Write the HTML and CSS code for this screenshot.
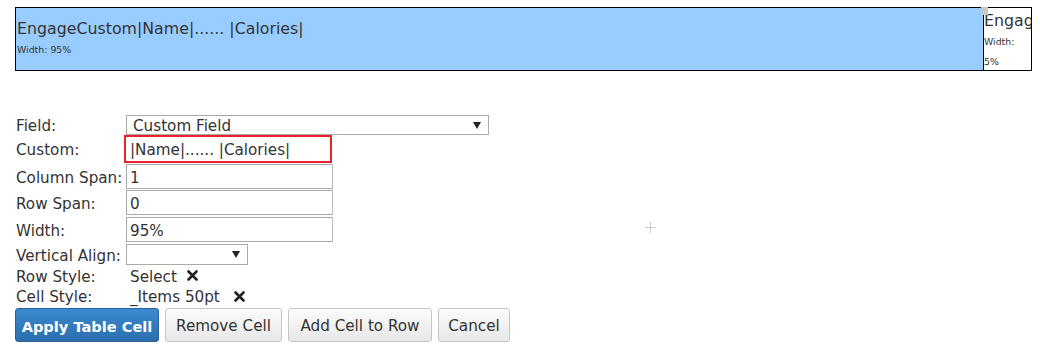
FILE: index.html
```html
<!DOCTYPE html>
<html lang="en">
<head>
  <meta charset="UTF-8">
  <title>Table Cell Editor</title>
  <link rel="stylesheet" href="styles.css">
</head>
<body>
  <div class="page">
    <div class="table-preview">
      <div class="cell cell-main">
        <div class="cell-title">EngageCustom|Name|...... |Calories|</div>
        <div class="cell-meta">Width: 95%</div>
      </div>
      <div class="cell cell-side">
        <span class="handle"></span>
        <div class="cell-title">EngageCustom</div>
        <div class="cell-meta">Width: 5%</div>
      </div>
    </div>

    <form class="cell-form">
      <div class="row row-field">
        <label class="label">Field:</label>
        <div class="fake-select select-wide">
          <span>Custom Field</span>
          <span class="arrow"></span>
        </div>
      </div>
      <div class="row row-custom">
        <label class="label">Custom:</label>
        <input class="text-input input-active" type="text" value="|Name|...... |Calories|">
      </div>
      <div class="row row-input gap1">
        <label class="label">Column Span:</label>
        <input class="text-input" type="text" value="1">
      </div>
      <div class="row row-input gap1">
        <label class="label">Row Span:</label>
        <input class="text-input" type="text" value="0">
      </div>
      <div class="row row-input gap2">
        <label class="label">Width:</label>
        <input class="text-input" type="text" value="95%">
      </div>
      <div class="row row-select gap2">
        <label class="label">Vertical Align:</label>
        <div class="fake-select select-small">
          <span></span>
          <span class="arrow"></span>
        </div>
      </div>
      <div class="row row-style">
        <label class="label">Row Style:</label>
        <span class="style-value">Select</span>
        <svg class="remove-x" width="11" height="11" viewBox="0 0 11 11"><path d="M1.5 1.5 L9.5 9.5 M9.5 1.5 L1.5 9.5" stroke="#222" stroke-width="2.6" stroke-linecap="round"/></svg>
      </div>
      <div class="row row-style row-last">
        <label class="label">Cell Style:</label>
        <span class="style-value">_Items 50pt</span>
        <svg class="remove-x remove-x-wide" width="11" height="11" viewBox="0 0 11 11"><path d="M1.5 1.5 L9.5 9.5 M9.5 1.5 L1.5 9.5" stroke="#222" stroke-width="2.6" stroke-linecap="round"/></svg>
      </div>
      <div class="buttons">
        <button type="button" class="btn btn-primary">Apply Table Cell</button>
        <button type="button" class="btn btn-remove">Remove Cell</button>
        <button type="button" class="btn btn-add">Add Cell to Row</button>
        <button type="button" class="btn btn-cancel">Cancel</button>
      </div>
    </form>

    <svg class="drop-plus" width="11" height="11" viewBox="0 0 11 11"><path d="M5.5 0 V11 M0 5.5 H11" stroke="#c8c8c8" stroke-width="1"/></svg>
  </div>
</body>
</html>
```

FILE: styles.css
```css
* {
  box-sizing: border-box;
}

body {
  margin: 0;
  background: #fff;
  font-family: 'DejaVu Sans', Verdana, sans-serif;
  font-size: 15.2px;
  color: #333;
}

.page {
  position: relative;
  padding: 7px 8px 0 15px;
  width: 1040px;
  height: 355px;
}

/* table preview */

.table-preview {
  display: flex;
  width: 1017px;
  height: 64px;
  border: 1px solid #000;
}

.cell {
  display: flex;
  flex-direction: column;
  justify-content: center;
  overflow: hidden;
}

.cell > div {
  flex-shrink: 0;
}

.cell-main {
  flex: none;
  width: 967px;
  background: #99ccff;
  padding-left: 1px;
}

.cell-side {
  position: relative;
  flex: 1;
  min-width: 0;
  justify-content: flex-start;
  padding-top: 2px;
  border-left: 1px solid #000;
  background: #fff;
  overflow: visible;
}

.cell-side .cell-title {
  overflow: hidden;
}

.cell-side .cell-meta {
  width: 40px;
}

.cell-title {
  font-size: 15.8px;
  line-height: 22px;
  color: #333;
  white-space: nowrap;
}

.cell-meta {
  font-size: 9.4px;
  line-height: 20px;
  color: #333;
}

.handle {
  position: absolute;
  top: -1px;
  left: -3px;
  width: 7px;
  height: 8px;
  background: #c8c8c8;
}

/* form */

.cell-form {
  margin-top: 44px;
}

.row {
  display: flex;
  align-items: center;
}

.label {
  width: 111px;
  padding: 2px 0 0 1px;
  color: #333;
  white-space: nowrap;
}

.row-field {
  height: 20px;
}

.row-custom {
  height: 28px;
}

.row-input {
  height: 25px;
}

.row-select {
  height: 21px;
}

.row-style {
  height: 21px;
}

.row-last {
  height: 20px;
}

.gap1 {
  margin-top: 1px;
}

.gap2 {
  margin-top: 2px;
}

.fake-select {
  display: flex;
  align-items: center;
  justify-content: space-between;
  height: 100%;
  border: 1px solid #aaa;
  padding: 2px 7px 0 6px;
  color: #333;
}

.select-wide {
  width: 363px;
}

.select-small {
  width: 122px;
}

.arrow {
  width: 0;
  height: 0;
  margin-top: -2px;
  border-left: 4px solid transparent;
  border-right: 4px solid transparent;
  border-top: 7px solid #222;
}

.text-input {
  width: 207px;
  height: 100%;
  border: 1px solid #aaa;
  border-right-color: #bbb;
  padding: 2px 0 0 3px;
  font-family: inherit;
  font-size: 15.2px;
  color: #333;
  outline: none;
  background: #fff;
}

.input-active {
  margin-left: -2px;
  width: 208px;
  border: 2px solid #e8232b;
  padding-left: 4px;
}

.style-value {
  padding: 2px 0 0 4px;
  color: #333;
}

.remove-x {
  margin-left: 10px;
}

.remove-x-wide {
  margin-left: 14px;
}

.buttons {
  display: flex;
  gap: 6px;
  margin-top: 2px;
}

.btn {
  height: 34px;
  padding: 2px 0 0;
  border: 1px solid #c6c6c6;
  border-radius: 3px;
  background: linear-gradient(#fbfbfb, #e8e8e8);
  font-family: inherit;
  font-size: 15.2px;
  color: #333;
  cursor: pointer;
}

.btn-primary {
  width: 144px;
  border-color: #2a639b;
  background: linear-gradient(#3b8ad0, #2b6ead);
  color: #fff;
  font-weight: 600;
  font-size: 14.6px;
}

.btn-remove {
  width: 117px;
}

.btn-add {
  width: 144px;
}

.btn-cancel {
  width: 72px;
}

.drop-plus {
  position: absolute;
  left: 645px;
  top: 222px;
}
```
